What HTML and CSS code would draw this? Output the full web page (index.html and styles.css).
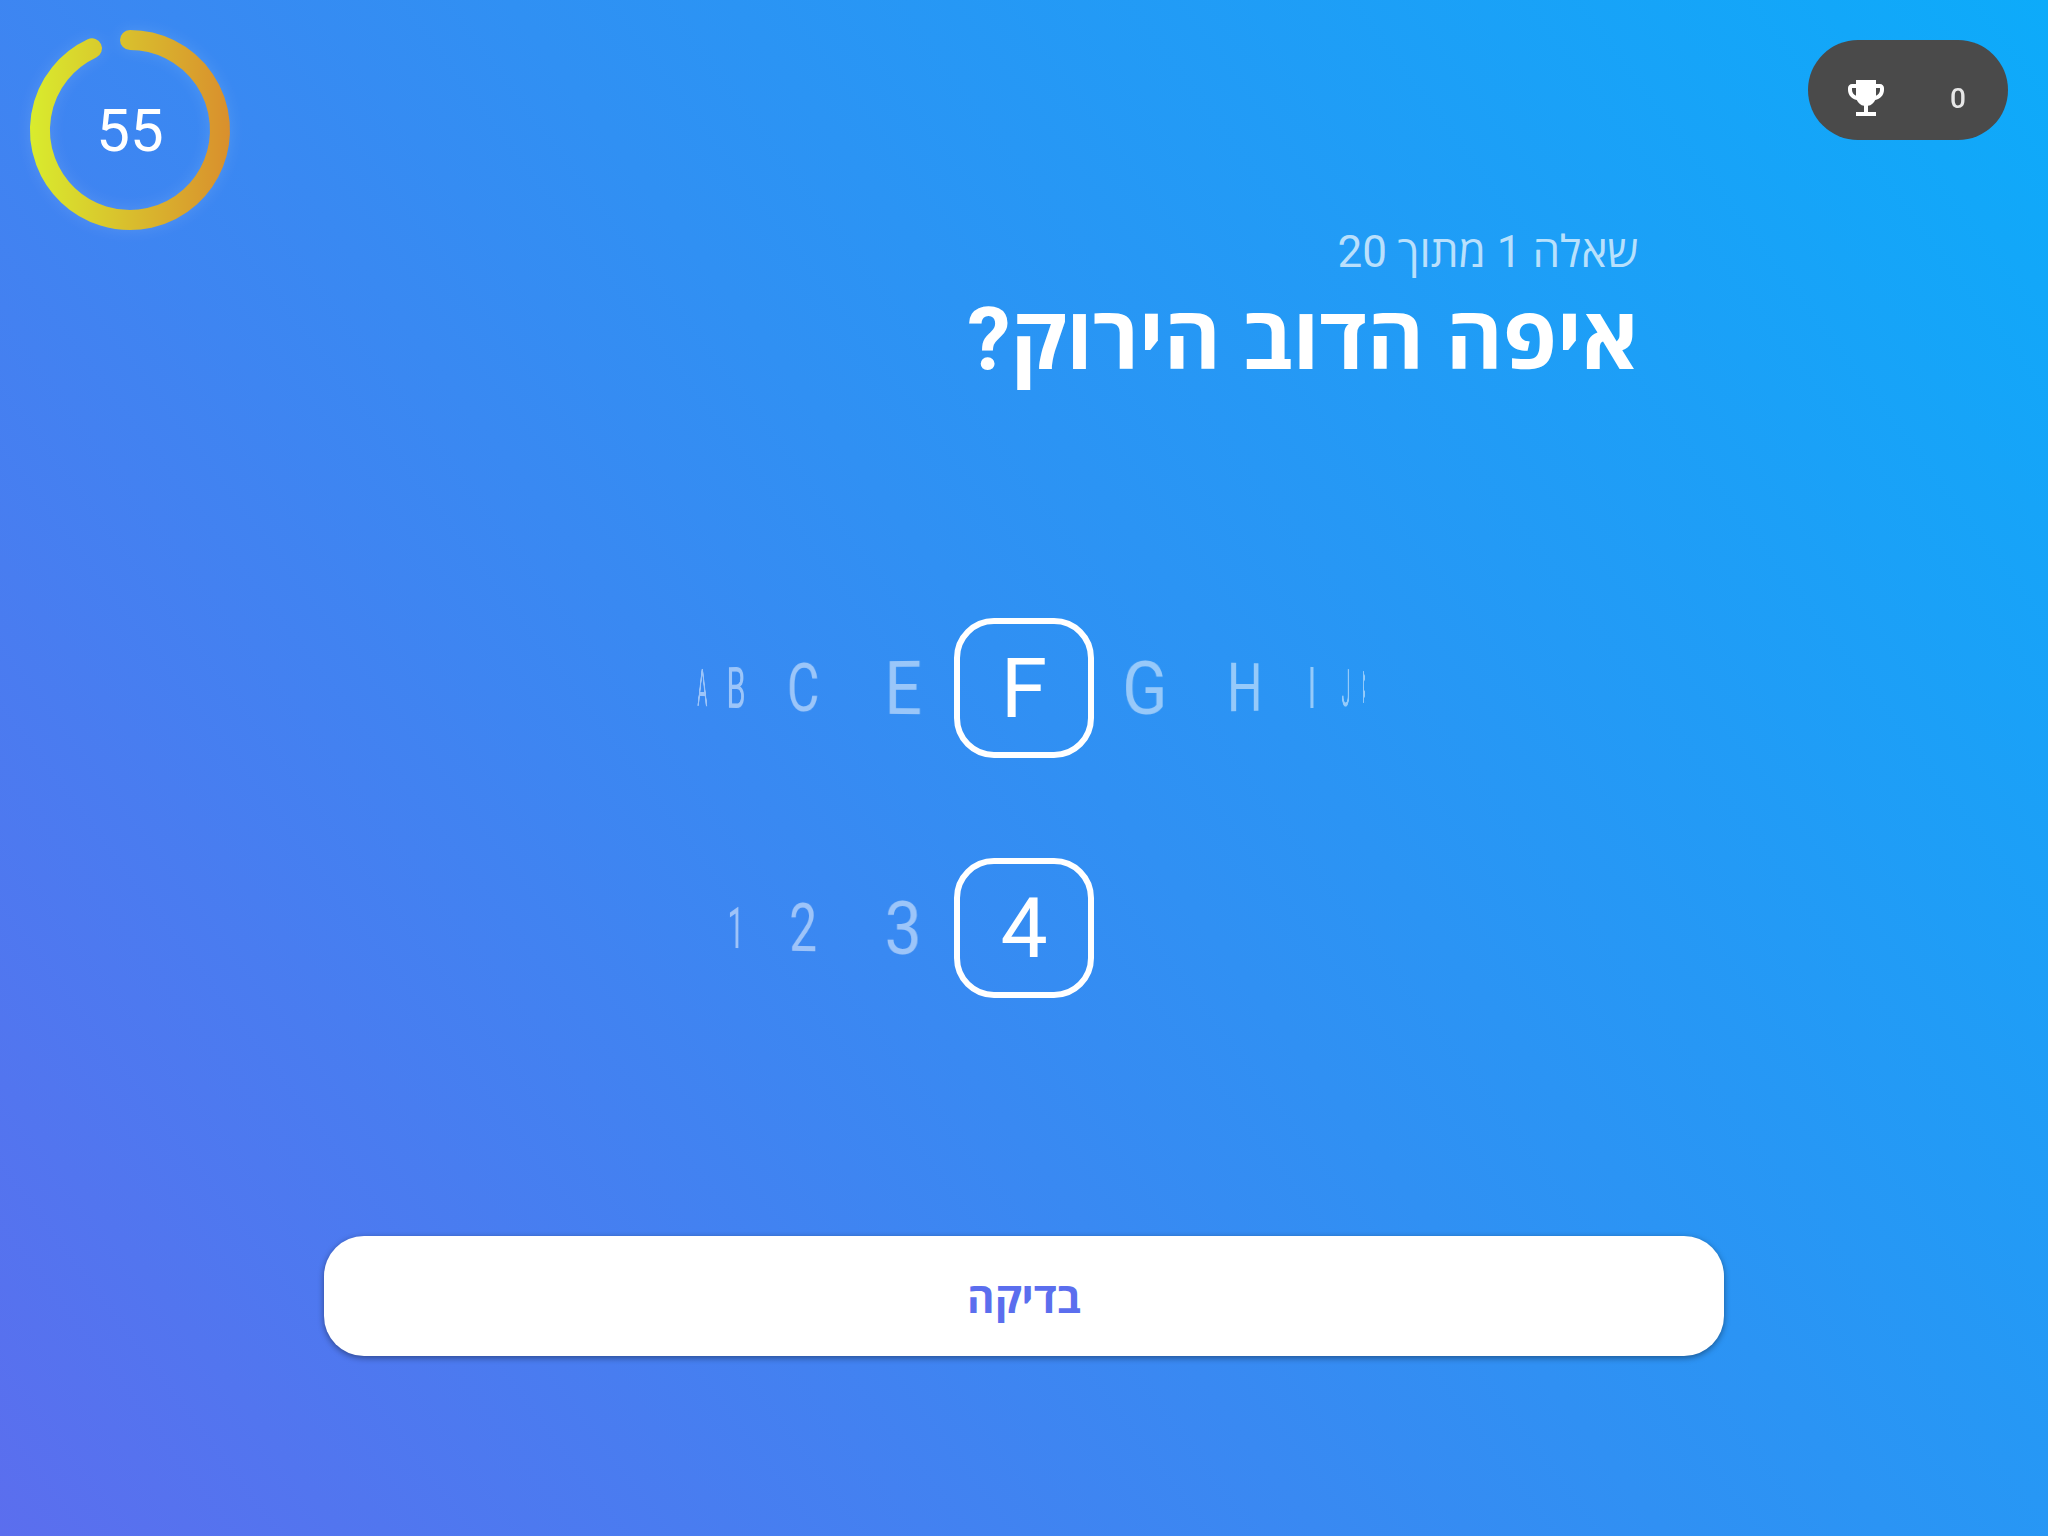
FILE: index.html
```
<!DOCTYPE html>
<html lang="he" dir="rtl">
<head>
<meta charset="utf-8">
<meta name="viewport" content="width=device-width, initial-scale=1">
<title>איפה הדוב הירוק?</title>
<link rel="stylesheet" href="styles.css">
</head>
<body>
<header class="topbar">
  <div class="score">
    <span class="score-value">0</span>
    <svg class="trophy" viewBox="0 0 24 24" aria-hidden="true"><path d="M19 5h-2V3H7v2H5c-1.1 0-2 .9-2 2v1c0 2.55 1.92 4.63 4.39 4.94.63 1.5 1.98 2.63 3.61 2.96V19H7v2h10v-2h-4v-3.1c1.63-.33 2.98-1.46 3.61-2.96C19.08 12.63 21 10.55 21 8V7c0-1.1-.9-2-2-2zM5 8V7h2v3.82C5.84 10.4 5 9.3 5 8zm14 0c0 1.3-.84 2.4-2 2.82V7h2v1z"/></svg>
  </div>
  <div class="timer">
    <svg class="ring" viewBox="0 0 200 200" aria-hidden="true">
      <defs>
        <linearGradient id="ring-fill" gradientUnits="userSpaceOnUse" x1="0" y1="0" x2="200" y2="0">
          <stop offset="0" stop-color="#d9ec2d"/>
          <stop offset="1" stop-color="#d98f2d"/>
        </linearGradient>
      </defs>
      <path d="M100 10A90 90 0 1 1 62 18.4"/>
    </svg>
    <span class="timer-value">55</span>
  </div>
</header>
<main class="quiz">
  <div class="question">
    <p class="progress">שאלה 1 מתוך 20</p>
    <h1 class="title">איפה הדוב הירוק?</h1>
  </div>
  <div class="wheels">
    <div class="wheel" dir="ltr">
      <button type="button" class="item left far">A</button>
      <button type="button" class="item left third">B</button>
      <button type="button" class="item left second">C</button>
      <button type="button" class="item left near">E</button>
      <button type="button" class="item current">F</button>
      <button type="button" class="item right near">G</button>
      <button type="button" class="item right second">H</button>
      <button type="button" class="item right third">I</button>
      <button type="button" class="item right far">J</button>
      <button type="button" class="item right edge">K</button>
    </div>
    <div class="wheel" dir="ltr">
      <button type="button" class="item left third">1</button>
      <button type="button" class="item left second">2</button>
      <button type="button" class="item left near">3</button>
      <button type="button" class="item current">4</button>
    </div>
  </div>
  <button type="button" class="check">בדיקה</button>
</main>
</body>
</html>
```
FILE: styles.css
```
* {
  box-sizing: border-box;
}

body {
  margin: 0;
  min-height: 100vh;
  color: #fff;
  font-family: Roboto, "Open Sans", sans-serif;
  background: linear-gradient(53deg, #5b6eee, #3090f3 52%, #0dabfa);
}

button {
  margin: 0;
  padding: 0;
  border: 0;
  background: none;
  color: inherit;
  font: inherit;
}

.topbar {
  display: flex;
  justify-content: space-between;
  align-items: flex-start;
  padding: 30px 40px 0 30px;
}

.score {
  display: flex;
  align-items: center;
  justify-content: space-between;
  width: 200px;
  height: 100px;
  margin-top: 10px;
  padding: 16px 42px 0 34px;
  border-radius: 50px;
  background: #4a4a4a;
}

.score-value {
  font-size: 28px;
  font-weight: 500;
  opacity: 0.87;
}

.trophy {
  width: 48px;
  height: 48px;
  fill: #fff;
}

.timer {
  display: grid;
  place-items: center;
  width: 200px;
  height: 200px;
}

.ring,
.timer-value {
  grid-area: 1 / 1;
}

.ring {
  width: 200px;
  height: 200px;
  overflow: visible;
  fill: none;
  stroke: url(#ring-fill);
  stroke-width: 20;
  stroke-linecap: round;
  filter: drop-shadow(0 0 8px rgba(255, 255, 255, 0.12));
}

.timer-value {
  font-size: 60px;
}

.quiz {
  display: flex;
  flex-direction: column;
  align-items: center;
}

.question {
  width: 60%;
}

.progress {
  margin: 0;
  font-size: 44px;
  line-height: 44px;
  color: rgba(255, 255, 255, 0.7);
}

.title {
  margin: 0;
  font-size: 87px;
  line-height: 130px;
  font-weight: 700;
}

.wheels {
  display: grid;
  gap: 100px;
  margin-top: 214px;
}

.wheel {
  display: grid;
  grid-template-columns: 2px 32px 36px 98px 102px 140px 102px 98px 36px 32px 2px;
  height: 140px;
}

.item {
  display: grid;
  place-items: center;
  grid-row: 1;
  color: rgba(255, 255, 255, 0.5);
}

.current {
  grid-column: 6;
  border: 6px solid #fff;
  border-radius: 40px;
  color: #fff;
  font-size: 84px;
}

.near {
  font-size: 74px;
  --turn: 26deg;
}

.second {
  font-size: 66px;
  --turn: 41deg;
}

.third {
  font-size: 58px;
  --turn: 58deg;
}

.far {
  font-size: 52px;
  --turn: 72deg;
}

.edge {
  font-size: 44px;
  --turn: 85deg;
}

.left {
  transform: perspective(1000px) rotateY(calc(-1 * var(--turn)));
}

.right {
  transform: perspective(1000px) rotateY(var(--turn));
}

.left.far {
  grid-column: 2;
}

.left.third {
  grid-column: 3;
}

.left.second {
  grid-column: 4;
}

.left.near {
  grid-column: 5;
}

.right.near {
  grid-column: 7;
}

.right.second {
  grid-column: 8;
}

.right.third {
  grid-column: 9;
}

.right.far {
  grid-column: 10;
}

.right.edge {
  grid-column: 11;
}

.check {
  width: 1400px;
  max-width: 90%;
  height: 120px;
  margin-top: 238px;
  border-radius: 40px;
  background: #fff;
  color: #5b6eee;
  font-size: 42px;
  font-weight: 700;
  box-shadow: 0 2px 6px rgba(0, 0, 0, 0.4);
}
```
